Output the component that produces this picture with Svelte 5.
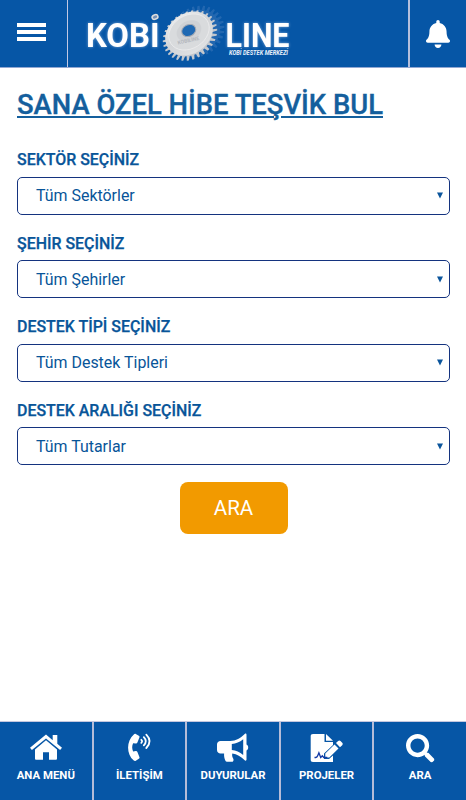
<script>
  const fields = [
    { label: 'SEKTÖR SEÇİNİZ', value: 'Tüm Sektörler' },
    { label: 'ŞEHİR SEÇİNİZ', value: 'Tüm Şehirler' },
    { label: 'DESTEK TİPİ SEÇİNİZ', value: 'Tüm Destek Tipleri' },
    { label: 'DESTEK ARALIĞI SEÇİNİZ', value: 'Tüm Tutarlar' },
  ];
  const tabs = [
    { label: 'ANA MENÜ', icon: 'home' },
    { label: 'İLETİŞİM', icon: 'phone' },
    { label: 'DUYURULAR', icon: 'horn' },
    { label: 'PROJELER', icon: 'file' },
    { label: 'ARA', icon: 'search' },
  ];
  // Toothed outline of a gear with the given radii
  function gear(teeth, outer, inner) {
    let d = '';
    for (let i = 0; i < teeth; i++) {
      [[0, inner], [0.15, outer], [0.5, outer], [0.65, inner]].forEach(([o, r], j) => {
        const a = ((i + o) / teeth) * Math.PI * 2;
        d += `${i + j === 0 ? 'M' : 'L'}${(Math.cos(a) * r).toFixed(2)} ${(Math.sin(a) * r).toFixed(2)}`;
      });
    }
    return d + 'Z';
  }
</script>

<div class="screen">
  <header>
    <button class="menu" aria-label="Menü"><i></i><i></i><i></i></button>
    <div class="brand">
      <svg width="340" height="67" viewBox="68 0 340 67">
        <defs>
          <linearGradient id="metal" x1="0" y1="0" x2="0" y2="1">
            <stop offset="0" stop-color="#e9eaeb" /><stop offset=".5" stop-color="#d3d5d8" /><stop offset="1" stop-color="#dfe1e3" />
          </linearGradient>
        </defs>
        <path d={gear(30, 28, 23.5)} transform="translate(197.500 31.500) rotate(-35) scale(1 .88)" fill="#2f6fb5" opacity=".7" />
        <path d={gear(30, 29, 24)} transform="translate(190 35.500) rotate(-35) scale(1 .8)" fill="#c3c7cd" />
        <ellipse rx="25.500" ry="20" transform="translate(189 33.500) rotate(-35)" fill="url(#metal)" />
        <ellipse rx="21.500" ry="16.500" transform="translate(189 32) rotate(-32)" fill="#d9dbdd" stroke="#ececed" stroke-width=".8" />
        <ellipse rx="13" ry="10" transform="translate(189 31) rotate(-30)" fill="#d0d2d5" />
        <ellipse rx="7.300" ry="5.800" transform="translate(188.700 30.500) rotate(-25)" fill="#1f69b3" stroke="#a4a9b2" stroke-width="1" />
        <text x="178" y="44.500" font-size="5" fill="#b5b8bd" transform="rotate(-12 178 44.500)" textLength="22">KOBİLİNE</text>
        <g fill="#fff" class="word">
          <text x="86" y="46.500" font-size="34" textLength="73.500" lengthAdjust="spacingAndGlyphs">KOBI</text>
          <text x="225.500" y="46.500" font-size="34" textLength="64" lengthAdjust="spacingAndGlyphs">LINE</text>
        </g>
        <text class="tag" x="229" y="55.300" font-size="6.500" fill="#e8f0fa" textLength="59" lengthAdjust="spacingAndGlyphs">KOBİ DESTEK MERKEZİ</text>
        <ellipse cx="155" cy="17" rx="3" ry="2.200" transform="rotate(-20 155 17)" fill="#7590b6" stroke="#dedede" stroke-width="1.500" />
      </svg>
    </div>
    <button class="bell" aria-label="Bildirimler">
      <svg width="24" height="28" viewBox="0 0 448 512" fill="#fff" preserveAspectRatio="none"><path d="M224 512c35.320 0 63.970-28.650 63.970-64H160.030c0 35.350 28.650 64 63.970 64zm215.390-149.710c-19.320-20.760-55.470-51.990-55.470-154.290 0-77.700-54.480-139.900-127.940-155.160V32c0-17.670-14.320-32-31.980-32s-31.980 14.330-31.980 32v20.840C118.560 68.100 64.080 130.300 64.080 208c0 102.300-36.150 133.530-55.470 154.290-6 6.450-8.660 14.160-8.610 21.710.110 16.400 12.980 32 32.100 32h383.800c19.120 0 32-15.600 32.100-32 .050-7.550-2.610-15.270-8.610-21.710z" /></svg>
    </button>
  </header>

  <main>
    <h1>SANA ÖZEL HİBE TEŞVİK BUL</h1>
    {#each fields as f}
      <section>
        <h2>{f.label}</h2>
        <div class="select"><span>{f.value}</span><svg width="6" height="7" viewBox="0 0 6 7"><path d="M0 .5h6L3 6.500z" fill="#0b559c" /></svg></div>
      </section>
    {/each}
    <button class="go">ARA</button>
  </main>

  <nav>
    {#each tabs as t}
      <a href="#{t.icon}">
        <svg width="34" height="30" viewBox="0 0 34 30" fill="#fff">
          {#if t.icon === 'home'}
            <path d="M17 1.500 1 14.800l1.900 2.300L17 5.600l14.100 11.500 1.900-2.300-4.700-4V2h-4.600v5.200z" />
            <path d="M17 7.300 6 16.500v9c0 .8.500 1.300 1.300 1.300h6.700v-7.500h6v7.500h6.700c.8 0 1.300-.5 1.300-1.300v-9z" />
          {:else if t.icon === 'phone'}
            <path d="M11.800 1.400c-7.600 6.400-7.600 19.800 0 26.100.6.5 1.300.6 2 .2l3-1.900c.7-.4.900-1.100.6-1.800l-2-5c-.3-.7-.9-1-1.600-.9l-2.700.3c-1.200-2.900-1.200-5.300 0-8.200l2.700.3c.7.100 1.300-.3 1.600-.9l2-5c.3-.7.100-1.400-.6-1.800l-3-1.800c-.7-.4-1.400-.2-2 .4z" />
            <g fill="none" stroke="#fff" stroke-width="1.800" stroke-linecap="round"><path d="M19.300 6.800q1.600 1.500 0 3M21.800 4.200q4 4.100 0 8.200M24.300 1.600q6.600 6.700 0 13.400" /></g>
          {:else if t.icon === 'horn'}
            <path fill-rule="evenodd" d="M29 .8c.8-.5 1.500.1 1.500 1v9.600c2.300 1.100 2.300 5 0 6.100v9c0 1-.7 1.500-1.500.9-4.300-4-8-6.300-12.700-6.900-.4 1.900-.1 3.700 1.100 5.400.5 1.300-.3 2.900-1.600 2.900h-4.700c-.9 0-1.500-.4-1.800-1.200-1-2.700-1.400-4.800-1.200-7.100H4.500C2.600 20.500 1 19 1 17v-5.600C1 9.500 2.600 8 4.500 8h9.700C20 8 24.500 5.300 29 .8zM27.200 6.200C23.600 9 20 10.700 15.800 11.100v6c4.200.4 7.800 2.100 11.400 4.900z" />
          {:else if t.icon === 'file'}
            <path d="M3 1h11.500v8H23v3l-9 8.500V26h5l4-3.600V29H3C1.500 29 .7 28.300.7 27V3C.7 1.700 1.500 1 3 1zM16 1l7 6.800h-7zM24.500 11.500l4 4L19.300 24.500h-4v-4zM26 10l2.100-1.900c.8-.7 1.700-.7 2.400 0l1.700 1.700c.7.7.7 1.700 0 2.400L30 14.200z" />
            <path d="M4.500 24.500h1.300c1.200 0 1.600-.8 2.100-2.200l1-2.500 1.800 4.800 1.600-1.800 1.500 1.700h3.500" fill="none" stroke="#1239a6" stroke-width="1.300" />
          {:else}
            <svg x="3" y="1" width="28.500" height="28.500" viewBox="0 0 512 512"><path d="M505 442.700L405.300 343c-4.500-4.500-10.600-7-17-7H372c27.600-35.300 44-79.700 44-128C416 93.100 322.900 0 208 0S0 93.100 0 208s93.100 208 208 208c48.300 0 92.700-16.400 128-44v16.300c0 6.400 2.500 12.500 7 17l99.700 99.700c9.400 9.400 24.600 9.400 33.900 0l28.300-28.300c9.400-9.400 9.400-24.600.1-34zM208 336c-70.700 0-128-57.200-128-128 0-70.700 57.200-128 128-128 70.700 0 128 57.200 128 128 0 70.700-57.200 128-128 128z" /></svg>
          {/if}
        </svg>
        <span>{t.label}</span>
      </a>
    {/each}
  </nav>
</div>

<style>
  :global(body) { background: #fff; }
  .screen { width: 466px; height: 800px; display: flex; flex-direction: column; font-family: Roboto, sans-serif; background: #fff; overflow: hidden; }
  button { font-family: inherit; border: 0; padding: 0; background: none; }
  header { height: 68px; box-sizing: border-box; display: flex; background: #0656a6; border-bottom: 1px solid #91a7d2; }
  .menu { width: 50px; box-sizing: content-box; display: flex; flex-direction: column; align-items: flex-start; gap: 3px; padding: 23px 0 0 17px; border-right: 1px solid #c2c8e4; }
  .menu i { width: 29px; height: 4px; background: #fff; }
  .brand { flex: 1; }
  .brand svg { display: block; }
  .brand text { font-family: Roboto, sans-serif; font-weight: 700; }
  .word { filter: drop-shadow(0 0 1.500px #79a5d5); }
  .brand .tag { font-style: italic; }
  .bell { width: 58px; box-sizing: border-box; border-left: 2px solid #b4bfdc; display: flex; padding: 19.500px 0 0 16px; }
  main { flex: 1; padding: 0 16px 0 17px; color: #085599; }
  h1 { margin: 20px 0 22px; font-size: 27.400px; line-height: 34px; height: 34px; font-weight: 500; white-space: nowrap; text-decoration: underline; text-decoration-thickness: 2px; text-underline-offset: 2px; color: #145f9d; -webkit-text-stroke: .350px #145f9d; }
  section { height: 83.500px; padding-top: 5px; box-sizing: border-box; }
  h2 { margin: 0; font-size: 15.950px; line-height: 21px; font-weight: 500; height: 27.500px; white-space: nowrap; -webkit-text-stroke: .250px #085599; }
  .select { height: 38px; box-sizing: border-box; border: 1px solid #14337f; border-radius: 5px; display: flex; align-items: center; justify-content: space-between; padding: 0 6px 0 18px; font-size: 15.950px; }
  .go { display: block; width: 108px; height: 52px; margin: 4px 0 0 162.500px; border-radius: 8px; background: #f29a00; color: #fff; font-size: 20.500px; }
  nav { height: 79px; box-sizing: border-box; display: flex; background: #0656a6; border-top: 1px solid #c4c7df; }
  nav a { flex: 1; display: flex; flex-direction: column; align-items: center; color: #fff; text-decoration: none; padding-top: 11px; border-right: 2px solid #b5bcd8; }
  nav a:last-child { border-right: 0; }
  nav span { font-size: 11.400px; line-height: 16px; font-weight: 700; margin-top: 3.500px; white-space: nowrap; }
</style>
